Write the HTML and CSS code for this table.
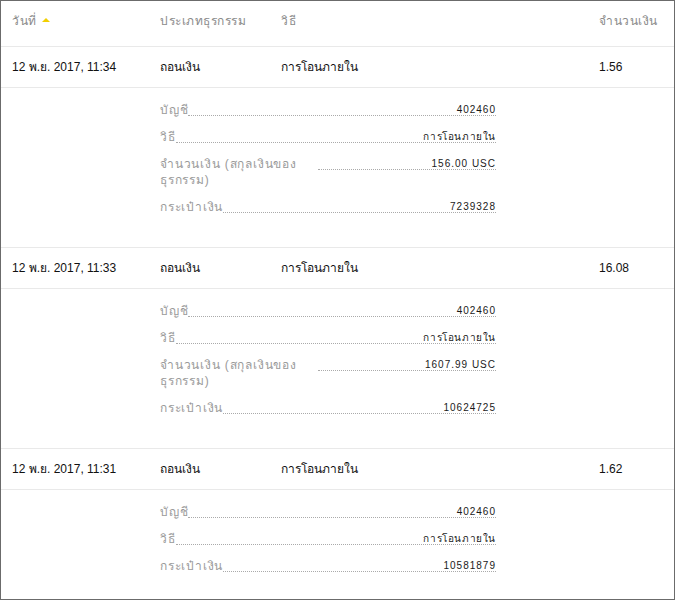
FILE: index.html
```html
<!DOCTYPE html>
<html lang="th">
<head>
<meta charset="utf-8">
<link rel="stylesheet" href="styles.css">
</head>
<body>
<div class="frame">
  <div class="grid head">
    <div class="hcell">วันที่ <span class="sort"></span></div>
    <div class="hcell">ประเภทธุรกรรม</div>
    <div class="hcell">วิธี</div>
    <div class="hcell">จำนวนเงิน</div>
  </div>

  <div class="grid row">
    <div>12 พ.ย. 2017, 11:34</div>
    <div>ถอนเงิน</div>
    <div>การโอนภายใน</div>
    <div>1.56</div>
  </div>
  <div class="details">
    <div class="dl">
      <div class="d"><span class="lab">บัญชี</span><span class="lead"><span class="val">402460</span></span></div>
      <div class="d"><span class="lab">วิธี</span><span class="lead"><span class="val th">การโอนภายใน</span></span></div>
      <div class="d"><span class="lab wrap">จำนวนเงิน (สกุลเงินของธุรกรรม)</span><span class="lead"><span class="val">156.00 USC</span></span></div>
      <div class="d"><span class="lab">กระเป๋าเงิน</span><span class="lead"><span class="val">7239328</span></span></div>
    </div>
  </div>

  <div class="grid row">
    <div>12 พ.ย. 2017, 11:33</div>
    <div>ถอนเงิน</div>
    <div>การโอนภายใน</div>
    <div>16.08</div>
  </div>
  <div class="details">
    <div class="dl">
      <div class="d"><span class="lab">บัญชี</span><span class="lead"><span class="val">402460</span></span></div>
      <div class="d"><span class="lab">วิธี</span><span class="lead"><span class="val th">การโอนภายใน</span></span></div>
      <div class="d"><span class="lab wrap">จำนวนเงิน (สกุลเงินของธุรกรรม)</span><span class="lead"><span class="val">1607.99 USC</span></span></div>
      <div class="d"><span class="lab">กระเป๋าเงิน</span><span class="lead"><span class="val">10624725</span></span></div>
    </div>
  </div>

  <div class="grid row">
    <div>12 พ.ย. 2017, 11:31</div>
    <div>ถอนเงิน</div>
    <div>การโอนภายใน</div>
    <div>1.62</div>
  </div>
  <div class="details">
    <div class="dl">
      <div class="d"><span class="lab">บัญชี</span><span class="lead"><span class="val">402460</span></span></div>
      <div class="d"><span class="lab">วิธี</span><span class="lead"><span class="val th">การโอนภายใน</span></span></div>
      <div class="d"><span class="lab">กระเป๋าเงิน</span><span class="lead"><span class="val">10581879</span></span></div>
    </div>
  </div>
</div>
</body>
</html>
```

FILE: styles.css
```css
* { box-sizing: border-box; }
html, body { margin: 0; padding: 0; background: #fff; }
body {
  font-family: "Liberation Sans", Arial, sans-serif;
  font-size: 12px;
  color: #111;
}
.frame {
  width: 675px;
  height: 600px;
  border: 1px solid #6b6b6b;
  overflow: hidden;
}
.grid {
  display: grid;
  grid-template-columns: 148px 121px 318px 1fr;
  padding-left: 11px;
  border-bottom: 1px solid #e9e9e9;
}
.head {
  height: 46px;
  padding-top: 12px;
  line-height: 16px;
  color: #8a8a8a;
  letter-spacing: 0.5px;
}
.sort {
  display: inline-block;
  width: 0; height: 0;
  border-left: 4px solid transparent;
  border-right: 4px solid transparent;
  border-bottom: 4px solid #f2cf00;
  vertical-align: 3px;
  margin-left: 2px;
}
.row {
  height: 41px;
  align-items: center;
  line-height: 16px;
}
.details {
  padding: 14px 0 32px 159px;
  border-bottom: 1px solid #e9e9e9;
}
.details:last-child { border-bottom: 0; }
.dl {
  width: 336px;
  display: flex;
  flex-direction: column;
  gap: 11px;
}
.d {
  display: flex;
  align-items: flex-start;
  line-height: 16px;
}
.lab {
  color: #9a9a9a;
  letter-spacing: 0.8px;
  flex: none;
}
.lab.wrap { flex: 0 1 158px; }
.lead {
  flex: 1;
  height: 14px;
  display: flex;
  justify-content: flex-end;
  align-items: flex-start;
  border-bottom: 1px dotted #aaa;
}
.val {
  margin-top: 2px;
  font-size: 10px;
  line-height: 11px;
  letter-spacing: 1px;
  color: #1a1a1a;
}
.val.th { letter-spacing: 0.6px; }
```
